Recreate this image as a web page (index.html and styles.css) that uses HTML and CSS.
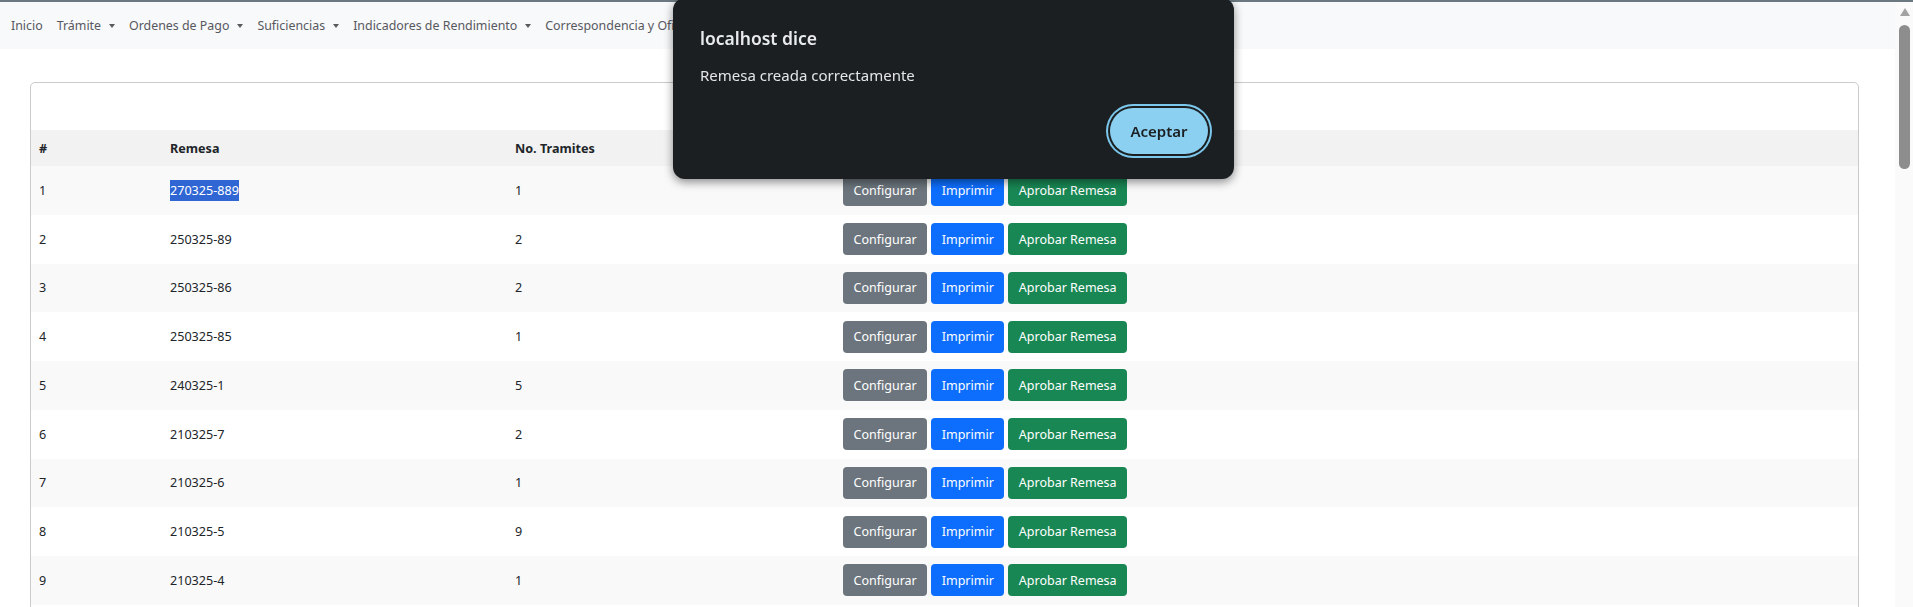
FILE: index.html
```html
<!DOCTYPE html>
<html lang="es">
<head>
<meta charset="utf-8">
<title>Remesas</title>
<link rel="stylesheet" href="styles.css">
</head>
<body>
<div class="topline"></div>
<div class="frame">
  <div class="page">
    <nav class="navbar">
      <a class="nav-link">Inicio</a>
      <a class="nav-link dropdown">Trámite</a>
      <a class="nav-link dropdown">Ordenes de Pago</a>
      <a class="nav-link dropdown">Suficiencias</a>
      <a class="nav-link dropdown">Indicadores de Rendimiento</a>
      <a class="nav-link dropdown">Correspondencia y Oficios</a>
    </nav>
    <main class="content">
      <section class="card">
        <table class="table">
          <colgroup>
            <col class="c1"><col class="c2"><col class="c3"><col>
          </colgroup>
          <thead>
            <tr><th>#</th><th>Remesa</th><th>No. Tramites</th><th>Acciones</th></tr>
          </thead>
          <tbody>
            <tr><td>1</td><td><span class="sel">270325-889</span></td><td>1</td><td class="acts"><button class="btn gray">Configurar</button><button class="btn blue">Imprimir</button><button class="btn green">Aprobar Remesa</button></td></tr>
            <tr><td>2</td><td>250325-89</td><td>2</td><td class="acts"><button class="btn gray">Configurar</button><button class="btn blue">Imprimir</button><button class="btn green">Aprobar Remesa</button></td></tr>
            <tr><td>3</td><td>250325-86</td><td>2</td><td class="acts"><button class="btn gray">Configurar</button><button class="btn blue">Imprimir</button><button class="btn green">Aprobar Remesa</button></td></tr>
            <tr><td>4</td><td>250325-85</td><td>1</td><td class="acts"><button class="btn gray">Configurar</button><button class="btn blue">Imprimir</button><button class="btn green">Aprobar Remesa</button></td></tr>
            <tr><td>5</td><td>240325-1</td><td>5</td><td class="acts"><button class="btn gray">Configurar</button><button class="btn blue">Imprimir</button><button class="btn green">Aprobar Remesa</button></td></tr>
            <tr><td>6</td><td>210325-7</td><td>2</td><td class="acts"><button class="btn gray">Configurar</button><button class="btn blue">Imprimir</button><button class="btn green">Aprobar Remesa</button></td></tr>
            <tr><td>7</td><td>210325-6</td><td>1</td><td class="acts"><button class="btn gray">Configurar</button><button class="btn blue">Imprimir</button><button class="btn green">Aprobar Remesa</button></td></tr>
            <tr><td>8</td><td>210325-5</td><td>9</td><td class="acts"><button class="btn gray">Configurar</button><button class="btn blue">Imprimir</button><button class="btn green">Aprobar Remesa</button></td></tr>
            <tr><td>9</td><td>210325-4</td><td>1</td><td class="acts"><button class="btn gray">Configurar</button><button class="btn blue">Imprimir</button><button class="btn green">Aprobar Remesa</button></td></tr>
          </tbody>
        </table>
      </section>
    </main>
  </div>
  <div class="scrollbar">
    <div class="arrow"></div>
    <div class="thumb"></div>
  </div>
</div>

<div class="dialog" role="alertdialog">
  <h2 class="dlg-title">localhost dice</h2>
  <p class="dlg-msg">Remesa creada correctamente</p>
  <div class="dlg-actions"><button class="dlg-btn">Aceptar</button></div>
</div>
</body>
</html>
```

FILE: styles.css
```css
* { box-sizing: border-box; }
html, body {
  margin: 0;
  height: 100%;
  overflow: hidden;
  background: #fff;
  font-family: "Noto Sans", "Open Sans", sans-serif;
  font-size: 12.6px;
  color: #212529;
}
.topline { height: 2px; background: #6b7880; }
.frame { display: flex; height: calc(100% - 2px); }
.page { flex: 1; min-width: 0; }

.navbar {
  display: flex;
  align-items: center;
  height: 47px;
  background: #f8f9fa;
  padding: 0 0 0 4px;
  font-size: 12.4px;
}
.nav-link {
  color: #57585f;
  padding: 0 7px;
  white-space: nowrap;
}
.dropdown::after {
  content: "";
  display: inline-block;
  margin-left: 8px;
  vertical-align: 2px;
  border-top: 4px solid #5a5a5a;
  border-left: 3.5px solid transparent;
  border-right: 3.5px solid transparent;
}

.content { padding: 33px 36px 0 30px; }
.card {
  border: 1px solid #cbcbcb;
  border-radius: 5px;
  padding-top: 47px;
  padding-bottom: 60px;
  background: #fff;
}
.table {
  width: 100%;
  border-collapse: collapse;
  table-layout: fixed;
}
.c1 { width: 131px; }
.c2 { width: 345px; }
.c3 { width: 328px; }
.table th {
  height: 36px;
  background: #f2f2f2;
  text-align: left;
  font-weight: 700;
  padding: 0 8px;
  color: #212529;
}
.table td {
  height: 48.75px;
  padding: 0 8px;
  vertical-align: middle;
}
.table tbody tr:nth-child(odd) td { background: #f9f9f9; }
.sel { background: #2f66d4; color: #fff; padding: 2px 0; }
.acts { white-space: nowrap; }

.btn {
  font-family: inherit;
  font-size: 12.5px;
  color: #fff;
  border: 1px solid transparent;
  border-radius: 4px;
  height: 32px;
  padding: 0 9.5px;
  margin-right: 4px;
  vertical-align: middle;
}
.gray { background: #6c757d; }
.blue { background: #0d6efd; }
.green { background: #198754; }

.scrollbar {
  width: 18px;
  background: #fafafa;
  position: relative;
  display: flex;
  flex-direction: column;
  align-items: center;
  padding-top: 6px;
}
.arrow {
  width: 0; height: 0;
  border-left: 5.5px solid transparent;
  border-right: 5.5px solid transparent;
  border-bottom: 8px solid #a3a3a3;
  margin-left: 1px;
}
.thumb {
  margin-top: 9px;
  margin-left: 1px;
  width: 11px;
  height: 144px;
  background: #8d8d8d;
  border-radius: 6px;
}

.dialog {
  position: fixed;
  left: 673px;
  top: -2px;
  width: 561px;
  height: 181px;
  background: #1b1f22;
  border-radius: 12px;
  box-shadow: 0 3px 10px rgba(0,0,0,0.45);
  padding: 0 26px 0 27px;
  color: #e8eaed;
}
.dlg-title {
  margin: 0;
  padding-top: 27px;
  font-size: 17.5px;
  font-weight: 600;
  line-height: 26px;
  color: #e8eaed;
}
.dlg-msg {
  margin: 13px 0 0;
  font-size: 15px;
  line-height: 22px;
  color: #e3e5e8;
}
.dlg-actions { display: flex; justify-content: flex-end; margin-top: 22px; }
.dlg-btn {
  font-family: inherit;
  font-size: 15px;
  font-weight: 600;
  color: #1b1f22;
  background: #8bd0f1;
  border: none;
  border-radius: 24px;
  width: 98px;
  height: 46px;
  box-shadow: 0 0 0 2px #1b1f22, 0 0 0 4px #7cc7ec;
}
```
